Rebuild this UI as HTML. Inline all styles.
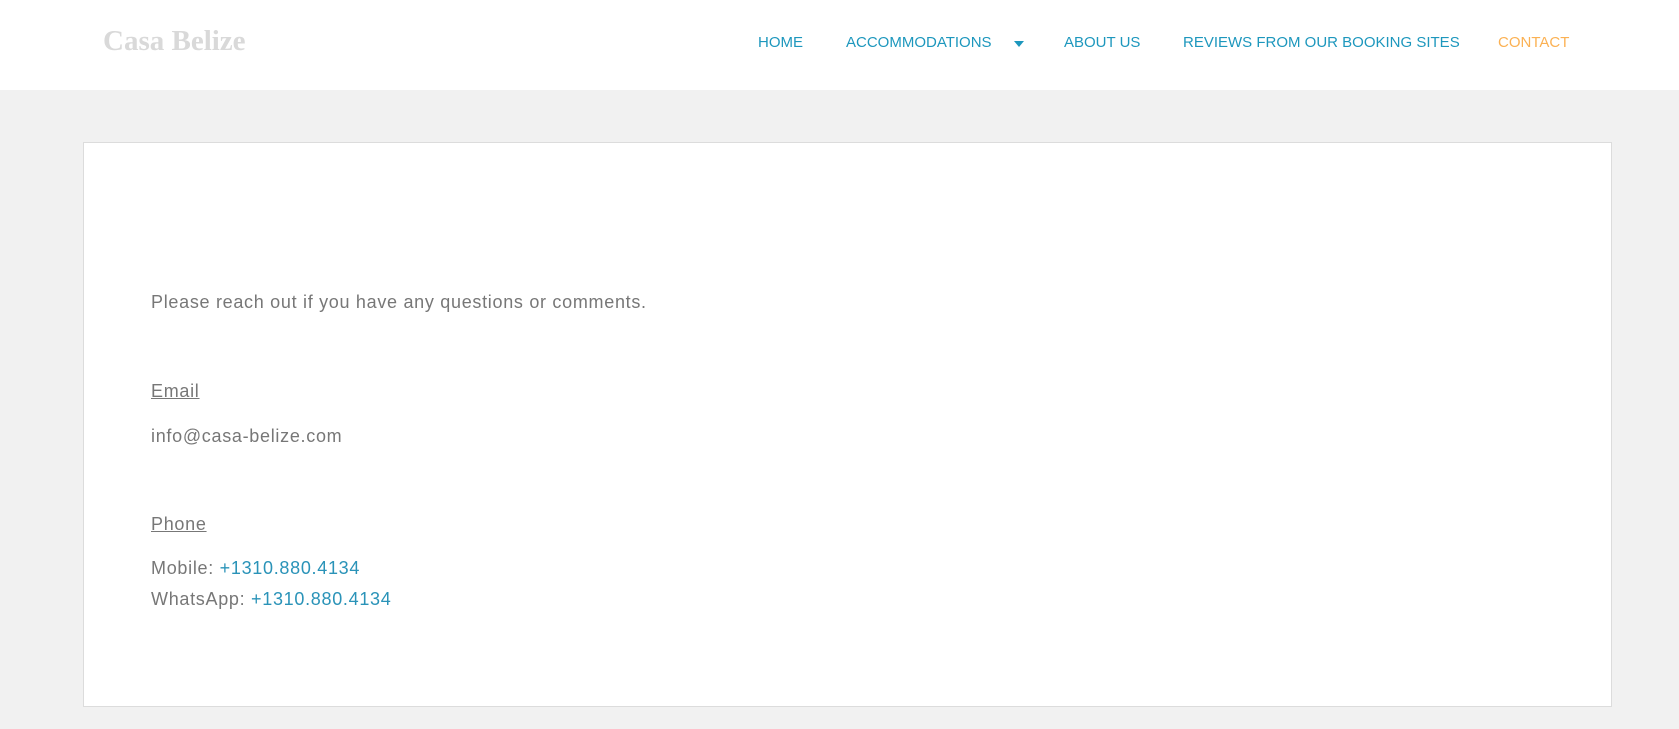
<!DOCTYPE html>
<html><head><meta charset="utf-8"><style>
*{margin:0;padding:0;box-sizing:border-box}
body{width:1679px;height:729px;background:#f1f1f1;font-family:"Liberation Sans",sans-serif;position:relative;overflow:hidden}
.hdr{position:absolute;left:0;top:0;width:1679px;height:90px;background:#fff}
.logo{position:absolute;left:103px;top:25px;font-family:"Liberation Serif",serif;font-weight:bold;font-size:29px;color:#d9d9d9}
.nav a{position:absolute;top:34px;font-size:15px;color:#1d97bd;text-decoration:none;white-space:nowrap}
.arr{position:absolute;left:1014px;top:41px;width:0;height:0;border-left:5px solid transparent;border-right:5px solid transparent;border-top:6px solid #1d97bd}
.box{position:absolute;left:83px;top:142px;width:1529px;height:565px;background:#fff;border:1px solid #dcdcdc}
.t{position:absolute;left:151px;font-size:18px;letter-spacing:0.7px;color:#777;white-space:nowrap}
.u{text-decoration:underline}
.l{color:#2a93b8}
</style></head><body>
<div class="hdr">
<div class="logo">Casa Belize</div>
<div class="nav">
<a style="left:758px">HOME</a>
<a style="left:846px">ACCOMMODATIONS</a>
<div class="arr"></div>
<a style="left:1064px">ABOUT US</a>
<a style="left:1183px">REVIEWS FROM OUR BOOKING SITES</a>
<a style="left:1498px;color:#fbb153">CONTACT</a>
</div>
</div>
<div class="box"></div>
<div class="t" style="top:292px">Please reach out if you have any questions or comments.</div>
<div class="t u" style="top:381px">Email</div>
<div class="t" style="top:426px">info@casa-belize.com</div>
<div class="t u" style="top:514px">Phone</div>
<div class="t" style="top:558px">Mobile: <span class="l">+1310.880.4134</span></div>
<div class="t" style="top:589px">WhatsApp: <span class="l">+1310.880.4134</span></div>
</body></html>
